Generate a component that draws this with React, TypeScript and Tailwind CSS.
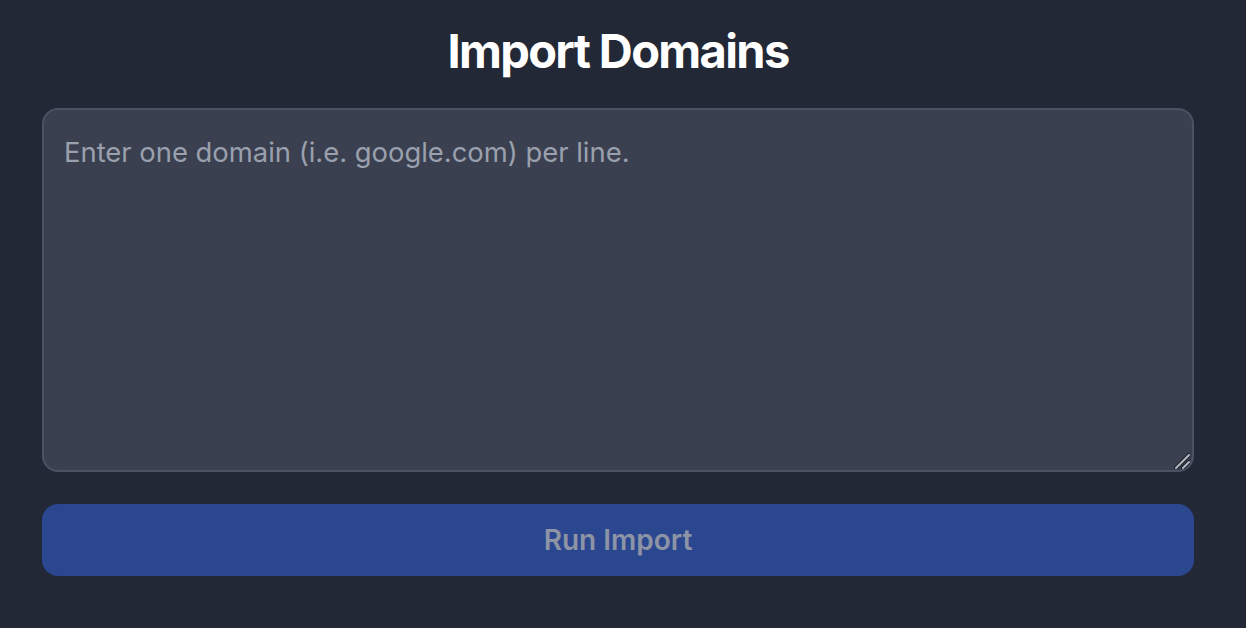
import { useState } from 'react';

export default function App() {
  const [domains, setDomains] = useState('');

  return (
    <div
      className="min-h-screen w-full bg-[#222836] pl-[42px] pr-[52px] pt-[22px]"
      style={{ fontFamily: 'Inter, "Noto Sans", sans-serif' }}
    >
      {/* Title */}
      <h1 className="text-center text-[47px] font-bold leading-[58px] tracking-[-0.035em] text-white">
        Import Domains
      </h1>

      {/* Domain list */}
      <div className="relative mt-[28px]">
        <textarea
          value={domains}
          onChange={(e) => setDomains(e.target.value)}
          placeholder="Enter one domain (i.e. google.com) per line."
          className="block h-[364px] w-full resize-none rounded-[16px] border-2 border-[#4a5263] bg-[#3a4050] px-[20px] py-[22px] text-[27.4px] leading-[40px] text-white placeholder:text-[#9aa0ad] focus:outline-none"
        />
        {/* resize grip */}
        <svg
          className="pointer-events-none absolute bottom-[3px] right-[4px]"
          width="16"
          height="16"
          viewBox="0 0 16 16"
        >
          <path d="M2 15 L15 2 M9 15 L15 9" stroke="#1c2029" strokeWidth="4" strokeLinecap="round" />
          <path d="M2 15 L15 2 M9 15 L15 9" stroke="#b4b8c0" strokeWidth="2" strokeLinecap="round" />
        </svg>
      </div>

      {/* Action */}
      <button
        disabled={!domains.trim()}
        className="mt-[32px] flex h-[72px] w-full items-center justify-center rounded-[16px] bg-[#2b4790] text-[28px] font-semibold text-[#8d94a5]"
      >
        Run Import
      </button>
    </div>
  );
}
